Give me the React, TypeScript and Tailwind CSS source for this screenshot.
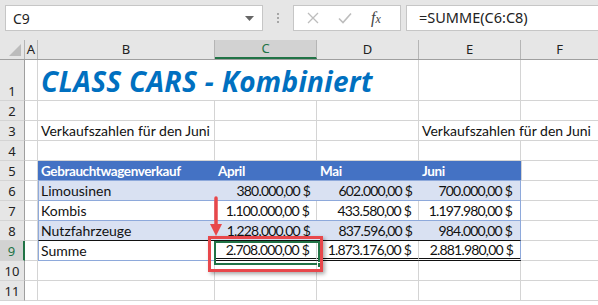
import React from "react";

const cols = [
  { key: "A", w: "w-[13px]" },
  { key: "B", w: "w-[177px]" },
  { key: "C", w: "w-[102px]" },
  { key: "D", w: "w-[102px]" },
  { key: "E", w: "w-[102px]" },
  { key: "F", w: "flex-1" },
];

const cell = "font-['Lato'] text-[14px] text-[#111] leading-none";
const num = "font-['Lato'] text-[14px] tracking-[-0.8px] text-[#111] leading-none";

function RowHead({ n, h = "h-[20px]", active = false }: { n: number; h?: string; active?: boolean }) {
  return (
    <div
      className={`${h} w-[25px] shrink-0 flex items-end justify-center pb-[2px] border-b border-[#d4d4d4] font-['Noto_Sans'] text-[13px] leading-none ${
        active ? "bg-[#d2d2d2] text-[#217346] border-r-2 border-r-[#217346]" : "bg-[#e6e6e6] text-[#222] border-r border-r-[#9f9f9f]"
      }`}
    >
      {n}
    </div>
  );
}

export default function App() {
  const tableRows = [
    { n: 6, label: "Limousinen", v: ["380.000,00 $", "602.000,00 $", "700.000,00 $"], band: true },
    { n: 7, label: "Kombis", v: ["1.100.000,00 $", "433.580,00 $", "1.197.980,00 $"], band: false },
    { n: 8, label: "Nutzfahrzeuge", v: ["1.228.000,00 $", "837.596,00 $", "984.000,00 $"], band: true },
  ];

  const plainRow = (n: number, content?: React.ReactNode) => (
    <div className="flex h-[20px]">
      <RowHead n={n} />
      {content ?? (
        <>
          <div className="w-[13px] border-r border-b border-[#d4d4d4]" />
          <div className="w-[177px] border-r border-b border-[#d4d4d4]" />
          <div className="w-[102px] border-r border-b border-[#d4d4d4]" />
          <div className="w-[102px] border-r border-b border-[#d4d4d4]" />
          <div className="w-[102px] border-r border-b border-[#d4d4d4]" />
          <div className="flex-1 border-b border-[#d4d4d4]" />
        </>
      )}
    </div>
  );

  return (
    <div className="w-[598px] h-[305px] overflow-hidden bg-white relative select-none">
      {/* formula bar */}
      <div className="h-[40px] bg-[#e6e6e6] flex items-start pt-[5px] pl-[5px]">
        <div className="w-[258px] h-[26px] bg-white border border-[#c6c6c6] flex items-center pl-[7px] pr-[8px]">
          <span className="font-['Noto_Sans'] text-[14px] text-[#222] flex-1">C9</span>
          <svg width="9" height="5" viewBox="0 0 9 5">
            <path d="M0 0h9L4.5 5z" fill="#666" />
          </svg>
        </div>
        <div className="w-[30px] h-[26px] flex flex-col items-center justify-center gap-[2px]">
          <span className="w-[2px] h-[2px] bg-[#a6a6a6]" />
          <span className="w-[2px] h-[2px] bg-[#a6a6a6]" />
          <span className="w-[2px] h-[2px] bg-[#a6a6a6]" />
        </div>
        <div className="w-[108px] h-[26px] bg-white border border-[#c6c6c6] flex items-center">
          <svg className="ml-[13px]" width="12" height="12" viewBox="0 0 12 12">
            <path d="M1 1l10 10M11 1L1 11" stroke="#bdbdbd" strokeWidth="1.3" />
          </svg>
          <svg className="ml-[19px]" width="14" height="12" viewBox="0 0 14 12">
            <path d="M1 6.5l4 4L13 1.5" stroke="#bdbdbd" strokeWidth="1.6" fill="none" />
          </svg>
          <span className="ml-[19px] font-['Liberation_Serif'] italic text-[16px] text-[#444] leading-none">
            f<span className="text-[12px]">x</span>
          </span>
        </div>
        <div className="ml-[5px] flex-1 h-[26px] bg-white border border-[#c6c6c6] border-r-0 flex items-center pl-[12px]">
          <span className="font-['Noto_Sans'] text-[14.5px] text-[#222]">=SUMME(C6:C8)</span>
        </div>
      </div>

      {/* column headers */}
      <div className="flex h-[20px] bg-[#e6e6e6] border-b border-[#9f9f9f] font-['Noto_Sans'] text-[13px] text-[#222] leading-none">
        <div className="w-[25px] h-full relative border-r border-[#b5b5b5]">
          <svg className="absolute right-[3px] bottom-[3px]" width="12" height="12" viewBox="0 0 12 12">
            <path d="M12 0v12H0z" fill="#bcbcbc" />
          </svg>
        </div>
        {cols.map((c) => (
          <div
            key={c.key}
            className={`${c.w} h-full flex items-center justify-center ${
              c.key === "C"
                ? "bg-[#d2d2d2] text-[#217346] border-b-2 border-[#217346] border-r border-r-[#b5b5b5]"
                : c.key === "F"
                ? ""
                : "border-r border-[#b5b5b5]"
            }`}
          >
            {c.key}
          </div>
        ))}
      </div>

      {/* row 1 title */}
      <div className="flex h-[41px]">
        <RowHead n={1} h="h-[41px]" />
        <div className="w-[13px] border-r border-b border-[#d4d4d4]" />
        <div className="w-[381px] border-r border-b border-[#d4d4d4] flex items-end pl-[3px] pb-[5px]">
          <span className="font-['Noto_Sans'] font-bold italic text-[28px] leading-none text-[#0070c0] whitespace-nowrap tracking-[0.3px]">
            CLASS CARS - Kombiniert
          </span>
        </div>
        <div className="w-[102px] border-r border-b border-[#d4d4d4]" />
        <div className="flex-1 border-b border-[#d4d4d4]" />
      </div>

      {plainRow(2)}

      {/* row 3 */}
      {plainRow(
        3,
        <>
          <div className="w-[13px] border-r border-b border-[#d4d4d4]" />
          <div className={`w-[177px] border-r border-b border-[#d4d4d4] flex items-end pl-[3px] pb-[2px] ${cell} whitespace-nowrap`}>
            Verkaufszahlen für den Juni
          </div>
          <div className="w-[102px] border-r border-b border-[#d4d4d4]" />
          <div className="w-[102px] border-r border-b border-[#d4d4d4]" />
          <div className={`flex-1 border-b border-[#d4d4d4] flex items-end pl-[3px] pb-[2px] ${cell} whitespace-nowrap`}>
            Verkaufszahlen für den Juni
          </div>
        </>
      )}

      {plainRow(4)}

      {/* row 5 header */}
      <div className="flex h-[20px]">
        <RowHead n={5} />
        <div className="w-[13px] border-r border-b border-[#d4d4d4]" />
        <div className="w-[483px] bg-[#4472c4] border-b border-[#8ea9db] flex items-end pb-[2px] font-['Lato'] font-bold text-[13.5px] tracking-[-0.4px] leading-none text-white">
          <div className="w-[177px] pl-[3px]">Gebrauchtwagenverkauf</div>
          <div className="w-[102px] pl-[3px]">April</div>
          <div className="w-[102px] pl-[3px]">Mai</div>
          <div className="w-[102px] pl-[3px]">Juni</div>
        </div>
        <div className="flex-1 border-l border-b border-[#d4d4d4]" />
      </div>

      {tableRows.map((r) => (
        <div key={r.n} className="flex h-[20px]">
          <RowHead n={r.n} />
          <div className="w-[13px] border-r border-b border-[#d4d4d4]" />
          <div
            className={`w-[483px] flex border-l border-r border-b border-l-[#8ea9db] border-r-[#8ea9db] ${
              r.n === 8 ? "border-b-[#111]" : "border-b-[#8ea9db]"
            } ${r.band ? "bg-[#d9e1f2]" : "bg-white"}`}
          >
            <div className={`w-[176px] flex items-end pl-[2px] pb-[2px] ${cell} ${r.band ? "" : "border-r border-[#d4d4d4]"}`}>{r.label}</div>
            {r.v.map((v, i) => (
              <div
                key={i}
                className={`${i === 2 ? "w-[100px]" : "w-[102px]"} flex items-end justify-end pr-[7px] pb-[2px] whitespace-nowrap ${num} ${
                  r.band || i === 2 ? "" : "border-r border-[#d4d4d4]"
                }`}
              >
                {v}
              </div>
            ))}
          </div>
          <div className="flex-1 border-b border-[#d4d4d4]" />
        </div>
      ))}

      {/* row 9 */}
      <div className="flex h-[20px]">
        <RowHead n={9} active />
        <div className="w-[13px] border-r border-b border-[#d4d4d4]" />
        <div className="w-[483px] flex">
          <div className={`w-[177px] border-l border-b border-[#8ea9db] border-r border-r-[#d4d4d4] flex items-end pl-[2px] pb-[2px] ${cell}`}>Summe</div>
          {["2.708.000,00 $", "1.873.176,00 $", "2.881.980,00 $"].map((v, i) => (
            <div
              key={i}
              className={`w-[102px] border-b-[3px] border-double border-b-[#111] flex items-end justify-end pr-[7px] pb-[1px] whitespace-nowrap ${num} ${
                i === 2 ? "border-r border-r-[#8ea9db]" : "border-r border-r-[#d4d4d4]"
              }`}
            >
              {v}
            </div>
          ))}
        </div>
        <div className="flex-1 border-b border-[#d4d4d4]" />
      </div>

      {plainRow(10)}
      {plainRow(11)}

      {/* selection */}
      <div className="absolute left-[214px] top-[241px] w-[106px] h-[24px] border-2 border-[#217346]" />
      <div className="absolute left-[317px] top-[262px] w-[6px] h-[6px] bg-[#217346] border border-white" />
      {/* red highlight */}
      <div className="absolute left-[208px] top-[236px] w-[115px] h-[36px] border-[3px] border-[#e8474b] shadow-[2px_2px_4px_rgba(0,0,0,0.35)]" />
      {/* arrow */}
      <svg className="absolute left-[208px] top-[196px]" width="16" height="42" viewBox="0 0 16 42">
        <path d="M8 2v29" stroke="#e8474b" strokeWidth="3.5" strokeLinecap="round" />
        <path d="M2 28l6 12 6-12z" fill="#e8474b" />
      </svg>
    </div>
  );
}
